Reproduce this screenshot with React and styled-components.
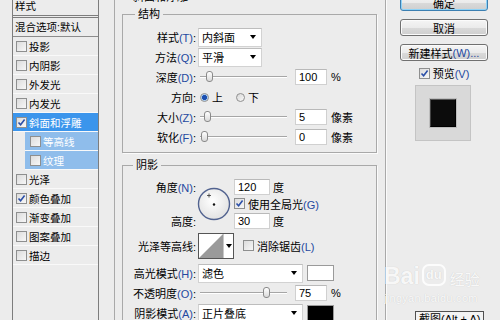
import styled, { createGlobalStyle } from "styled-components";

const GlobalStyle = createGlobalStyle`
  html, body {
    margin: 0;
    padding: 0;
    background: #ececec;
  }
  body {
    font-family: "Liberation Sans", "Noto Sans CJK SC", sans-serif;
    font-size: 11px;
    color: #000;
  }
`;

const effects = [
  { name: "投影" },
  { name: "内阴影" },
  { name: "外发光" },
  { name: "内发光" },
  { name: "斜面和浮雕", checked: true, tone: "active" },
  { name: "等高线", tone: "sub" },
  { name: "纹理", tone: "sub" },
  { name: "光泽" },
  { name: "颜色叠加", checked: true },
  { name: "渐变叠加" },
  { name: "图案叠加" },
  { name: "描边" },
];

const Check = ({ checked }) => (
  <CheckBox>
    {checked && (
      <svg width="9" height="9" viewBox="0 0 9 9">
        <path d="M1.5 4.5 L3.6 6.8 L7.6 1.6" fill="none" stroke="#2b4fa8" strokeWidth="1.6" />
      </svg>
    )}
  </CheckBox>
);

const Dial = () => (
  <svg width="34" height="34" viewBox="0 0 34 34">
    <defs>
      <radialGradient id="dialFill" cx="45%" cy="40%" r="60%">
        <stop offset="0%" stopColor="#ffffff" />
        <stop offset="100%" stopColor="#e2e2e2" />
      </radialGradient>
    </defs>
    <circle cx="17" cy="17" r="15.5" fill="url(#dialFill)" stroke="#51628f" strokeWidth="1.4" />
    <circle cx="17" cy="17.5" r="1.2" fill="#111" />
    <path d="M12 6.5 V10.5 M10 8.5 H14" stroke="#333" strokeWidth="0.8" />
  </svg>
);

const App = () => {
  return (
    <Screen>
      <GlobalStyle />
      <StylePanel>
        <PanelHead>样式</PanelHead>
        <BlendRow>混合选项:默认</BlendRow>
        {effects.map((e) => (
          <EffectRow key={e.name} $tone={e.tone}>
            <Check checked={e.checked} />
            <span>{e.name}</span>
          </EffectRow>
        ))}
      </StylePanel>

      <Settings>
        <Group $outer>
          <Legend $offset={8}>斜面和浮雕</Legend>
          <Group>
            <Legend $offset={12}>结构</Legend>
            <FormRow>
              <Label>
                样式<Key>(T)</Key>:
              </Label>
              <Select $w={64}>
                内斜面
                <Arrow />
              </Select>
            </FormRow>
            <FormRow>
              <Label>
                方法<Key>(Q)</Key>:
              </Label>
              <Select $w={64}>
                平滑
                <Arrow />
              </Select>
            </FormRow>
            <FormRow>
              <Label>
                深度<Key>(D)</Key>:
              </Label>
              <Slider>
                <Thumb $pos={6} />
              </Slider>
              <NumBox>100</NumBox>
              <Unit>%</Unit>
            </FormRow>
            <FormRow>
              <Label>方向:</Label>
              <RadioGroup>
                <RadioItem>
                  <Radio $on />上
                </RadioItem>
                <RadioItem>
                  <Radio />下
                </RadioItem>
              </RadioGroup>
            </FormRow>
            <FormRow>
              <Label>
                大小<Key>(Z)</Key>:
              </Label>
              <Slider>
                <Thumb $pos={4} />
              </Slider>
              <NumBox>5</NumBox>
              <Unit>像素</Unit>
            </FormRow>
            <FormRow>
              <Label>
                软化<Key>(F)</Key>:
              </Label>
              <Slider>
                <Thumb $pos={1} />
              </Slider>
              <NumBox>0</NumBox>
              <Unit>像素</Unit>
            </FormRow>
          </Group>

          <Group $gap>
            <Legend $offset={10}>阴影</Legend>
            <AngleGrid>
              <GridLabel $row={1}>
                角度<Key>(N)</Key>:
              </GridLabel>
              <DialCell>
                <Dial />
              </DialCell>
              <Inline $row={1}>
                <NumBox $w={36}>120</NumBox>
                <Unit $gap={3}>度</Unit>
              </Inline>
              <Inline $row={2}>
                <Check checked />
                <CheckText>
                  使用全局光<Key>(G)</Key>
                </CheckText>
              </Inline>
              <GridLabel $row={3}>高度:</GridLabel>
              <Inline $row={3}>
                <NumBox $w={36}>30</NumBox>
                <Unit $gap={3}>度</Unit>
              </Inline>
            </AngleGrid>
            <FormRow $h={33}>
              <Label>光泽等高线:</Label>
              <ContourPicker>
                <svg width="24" height="24" viewBox="0 0 24 24">
                  <rect width="24" height="24" fill="#fff" />
                  <polygon points="0,24 24,0 24,24" fill="#9a9a9a" />
                </svg>
                <ContourArrow>
                  <Arrow />
                </ContourArrow>
              </ContourPicker>
              <Inline $ml={9}>
                <Check />
                <CheckText>
                  消除锯齿<Key>(L)</Key>
                </CheckText>
              </Inline>
            </FormRow>
            <FormRow $h={22}>
              <Label>
                高光模式<Key>(H)</Key>:
              </Label>
              <Select $w={105}>
                滤色
                <Arrow />
              </Select>
              <Swatch $color="#fff" />
            </FormRow>
            <FormRow $h={17}>
              <Label>
                不透明度<Key>(O)</Key>:
              </Label>
              <Slider>
                <Thumb $pos={63} />
              </Slider>
              <NumBox>75</NumBox>
              <Unit>%</Unit>
            </FormRow>
            <FormRow $h={24}>
              <Label>
                阴影模式<Key>(A)</Key>:
              </Label>
              <Select $w={105}>
                正片叠底
                <Arrow />
              </Select>
              <Swatch $color="#000" />
            </FormRow>
          </Group>
        </Group>
      </Settings>

      <Actions>
        <ButtonStack>
          <Button $primary>确定</Button>
          <Button>取消</Button>
          <Button>
            新建样式<Key>(W)...</Key>
          </Button>
        </ButtonStack>
        <PreviewToggle>
          <Check checked />
          <span>
            预览<Key>(V)</Key>
          </span>
        </PreviewToggle>
        <PreviewBox>
          <PreviewSquare />
        </PreviewBox>
      </Actions>

      <Watermark>
        <WmLine>
          <WmBig>Bai</WmBig>
          <WmPaw>du</WmPaw>
          <WmCn>经验</WmCn>
        </WmLine>
        <WmUrl>jingyan.baidu.com</WmUrl>
      </Watermark>

      <Tooltip>截图(Alt + A)</Tooltip>
    </Screen>
  );
};

const Screen = styled.div`
  position: relative;
  width: 500px;
  height: 320px;
  overflow: hidden;
  display: flex;
  align-items: flex-start;
  background: #ececec;
`;

const StylePanel = styled.div`
  flex: none;
  margin-left: 12px;
  width: 85px;
  height: 330px;
  border-left: 1px solid #7d7d7d;
  border-right: 1px solid #7d7d7d;
  display: flex;
  flex-direction: column;
  font-size: 10.5px;
`;

const PanelHead = styled.div`
  height: 15px;
  line-height: 13px;
  padding-left: 2px;
  border-bottom: 3px double #7d7d7d;
`;

const BlendRow = styled.div`
  height: 18px;
  line-height: 18px;
  padding-left: 2px;
  border-bottom: 1px solid #8c8c8c;
  white-space: nowrap;
`;

const EffectRow = styled.div`
  display: flex;
  align-items: center;
  gap: 2px;
  height: 18px;
  border-bottom: 1px solid #f9f9f9;
  white-space: nowrap;
  padding-left: ${(p) => (p.$tone === "sub" ? 5 : 3)}px;
  margin-left: ${(p) => (p.$tone === "sub" ? 12 : 0)}px;
  background: ${(p) =>
    p.$tone === "active" ? "#3b95ec" : p.$tone === "sub" ? "#8fbdeb" : "transparent"};
  color: ${(p) => (p.$tone ? "#fff" : "#000")};
`;

const CheckBox = styled.span`
  flex: none;
  width: 11px;
  height: 11px;
  box-sizing: border-box;
  border: 1px solid #8e8f8f;
  background: linear-gradient(135deg, #dcdcdc, #f7f7f7);
  display: flex;
  align-items: center;
  justify-content: center;
`;

const Settings = styled.div`
  flex: none;
  margin-left: 15px;
  margin-top: -9px;
  width: 272px;
`;

const Group = styled.fieldset`
  display: block;
  min-width: 0;
  margin: ${(p) => (p.$outer ? "0" : p.$gap ? "6px 0 0" : "5px 0 0")};
  padding: ${(p) => (p.$outer ? "0 8px 0 7px" : "7px 0 5px 0")};
  height: ${(p) => (p.$outer ? "360px" : p.$gap ? "200px" : "auto")};
  box-sizing: border-box;
  border: 1px solid #a9a9a9;
  box-shadow: 1px 1px 0 #fbfbfb;
`;

const Legend = styled.legend`
  margin-left: ${(p) => p.$offset}px;
  padding: 0 3px;
  line-height: 12px;
  height: 12px;
  font-size: 11px;
`;

const Key = styled.span`
  color: #2448a0;
`;

const FormRow = styled.div`
  display: flex;
  align-items: center;
  height: ${(p) => p.$h || 20}px;
  white-space: nowrap;
`;

const Label = styled.span`
  flex: none;
  width: 73px;
  margin-right: 2px;
  text-align: right;
`;

const Select = styled.div`
  flex: none;
  width: ${(p) => p.$w}px;
  height: 19px;
  box-sizing: border-box;
  background: #fff;
  border: 1px solid #d2d2d2;
  border-top-color: #bdbdbd;
  display: flex;
  align-items: center;
  justify-content: space-between;
  padding: 0 5px 0 3px;
`;

const Arrow = styled.span`
  width: 0;
  height: 0;
  border-left: 3.5px solid transparent;
  border-right: 3.5px solid transparent;
  border-top: 4px solid #000;
`;

const Slider = styled.div`
  position: relative;
  flex: none;
  width: 87px;
  height: 12px;
  margin-left: 2px;

  &::before {
    content: "";
    position: absolute;
    left: 0;
    right: 0;
    top: 5px;
    height: 1px;
    background: #a6a6a6;
    box-shadow: 0 1px 0 #fff;
  }
`;

const Thumb = styled.span`
  position: absolute;
  top: 0;
  left: ${(p) => p.$pos}px;
  width: 7px;
  height: 11px;
  box-sizing: border-box;
  border: 1px solid #8a8a8a;
  border-radius: 3px;
  background: linear-gradient(#ffffff, #d9d9d9);
`;

const NumBox = styled.span`
  flex: none;
  width: ${(p) => p.$w || 32}px;
  height: 16px;
  margin-left: ${(p) => (p.$w ? 0 : 8)}px;
  box-sizing: border-box;
  background: #fff;
  border: 1px solid #d0d0d0;
  border-top-color: #b9b9b9;
  padding-left: 3px;
  line-height: 14px;
  font-size: 11px;
`;

const Unit = styled.span`
  margin-left: ${(p) => p.$gap || 4}px;
`;

const RadioGroup = styled.div`
  display: flex;
  align-items: center;
  gap: 13px;
  padding-left: 2px;
`;

const RadioItem = styled.span`
  display: flex;
  align-items: center;
  gap: 3px;
`;

const Radio = styled.span`
  width: 9px;
  height: 9px;
  border-radius: 50%;
  box-sizing: border-box;
  border: 1px solid #8f8f8f;
  background: ${(p) =>
    p.$on
      ? "radial-gradient(circle, #1c4fb0 0 2.2px, #9cc6f2 2.8px, #eaf3fd 4px)"
      : "linear-gradient(135deg, #d8d8d8, #f8f8f8)"};
`;

const AngleGrid = styled.div`
  display: grid;
  grid-template-columns: 73px 34px auto;
  grid-template-rows: 17px 17px 17px;
  column-gap: 2px;
  align-items: center;
  white-space: nowrap;
`;

const GridLabel = styled.span`
  grid-column: 1;
  grid-row: ${(p) => p.$row};
  text-align: right;
`;

const DialCell = styled.div`
  grid-column: 2;
  grid-row: 1 / 4;
  display: flex;
  align-items: center;
  justify-content: center;
  margin-left: -2px;
`;

const Inline = styled.div`
  grid-column: 3;
  grid-row: ${(p) => p.$row || "auto"};
  display: flex;
  align-items: center;
  margin-left: ${(p) => p.$ml || 0}px;
`;

const CheckText = styled.span`
  margin-left: 3px;
`;

const ContourPicker = styled.div`
  flex: none;
  display: flex;
  width: 36px;
  height: 26px;
  box-sizing: border-box;
  border: 1px solid #555;
  background: #fff;
`;

const ContourArrow = styled.div`
  flex: 1;
  display: flex;
  align-items: center;
  justify-content: center;
  border-left: 1px solid #c8c8c8;
`;

const Swatch = styled.span`
  flex: none;
  width: 27px;
  height: 16px;
  margin-left: 4px;
  box-sizing: border-box;
  border: 1px solid #9a9a9a;
  background: ${(p) => p.$color};
`;

const Actions = styled.div`
  flex: none;
  width: 88px;
  margin-left: 14px;
  margin-top: -6px;
  display: flex;
  flex-direction: column;
`;

const ButtonStack = styled.div`
  display: flex;
  flex-direction: column;
  gap: 8px;
`;

const Button = styled.div`
  height: 17px;
  box-sizing: border-box;
  border: 1px solid ${(p) => (p.$primary ? "#3c7fb1" : "#707070")};
  border-radius: 3px;
  background: linear-gradient(#f5f5f5 0%, #ebebeb 50%, #dadada 51%, #cfcfcf 100%);
  box-shadow: ${(p) => (p.$primary ? "inset 0 0 0 1px #8fd3f7" : "inset 0 0 0 1px #fbfbfb")};
  display: flex;
  align-items: center;
  justify-content: center;
  white-space: nowrap;
  font-size: 11px;
`;

const PreviewToggle = styled.div`
  height: 18px;
  margin-top: 3px;
  display: flex;
  align-items: center;
  justify-content: center;
  gap: 3px;
`;

const PreviewBox = styled.div`
  width: 56px;
  height: 56px;
  margin: 3px 0 0 15px;
  box-sizing: border-box;
  background: #d9d9d9;
  border: 1px solid #c4c4c4;
  display: flex;
  align-items: center;
  justify-content: center;
`;

const PreviewSquare = styled.div`
  width: 26px;
  height: 28px;
  box-sizing: border-box;
  background: #0c0c0c;
  border-top: 1px solid #555;
  border-left: 1px solid #444;
  border-right: 1px solid #000;
  border-bottom: 1px solid #000;
  box-shadow: 0 0 0 1px #bdbdbd;
`;

const Watermark = styled.div`
  position: absolute;
  left: 384px;
  top: 262px;
  color: rgba(255, 255, 255, 0.9);
  text-shadow: 0 0 1px rgba(0, 0, 0, 0.18);
  pointer-events: none;
`;

const WmLine = styled.div`
  display: flex;
  align-items: flex-end;
  gap: 2px;
`;

const WmBig = styled.span`
  font-family: "Liberation Sans", sans-serif;
  font-size: 23px;
  font-weight: bold;
  line-height: 28px;
`;

const WmPaw = styled.span`
  font-family: "Liberation Sans", sans-serif;
  font-size: 13px;
  font-weight: bold;
  line-height: 16px;
  padding: 1px 2px;
  margin-bottom: 4px;
  border-radius: 7px;
  border: 2px solid rgba(255, 255, 255, 0.85);
`;

const WmCn = styled.span`
  font-family: "Noto Sans CJK SC", sans-serif;
  font-size: 15px;
  line-height: 22px;
  margin-left: 2px;
`;

const WmUrl = styled.div`
  font-family: "Liberation Sans", sans-serif;
  font-size: 11px;
  margin-top: 2px;
  letter-spacing: 0.3px;
`;

const Tooltip = styled.div`
  position: absolute;
  left: 415px;
  top: 311px;
  padding: 1px 3px 4px;
  border: 1px solid #505050;
  background: #f3f3f3;
  font-size: 11px;
  line-height: 12px;
  white-space: nowrap;
`;

export default App;
